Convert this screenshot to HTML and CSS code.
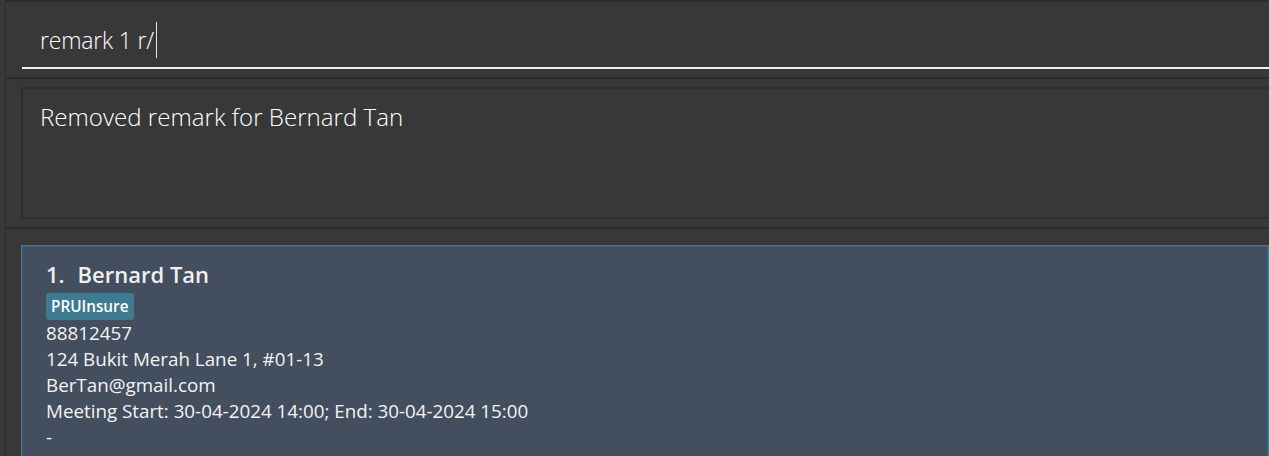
FILE: index.html
```html
<!DOCTYPE html>
<html lang="en">
<head>
<meta charset="utf-8">
<title>Address Book</title>
<link rel="stylesheet" href="styles.css">
</head>
<body>
<div class="app">
  <div class="pane command-pane">
    <div class="command-field"><span class="command-text">remark 1 r/</span><span class="caret"></span></div>
  </div>
  <div class="pane result-pane">
    <div class="result-box">Removed remark for Bernard Tan</div>
  </div>
  <div class="pane list-pane">
    <div class="card">
      <div class="card-title"><span class="card-id">1.</span><span class="card-name">Bernard Tan</span></div>
      <div class="tags"><span class="tag">PRUInsure</span></div>
      <div class="card-field">88812457</div>
      <div class="card-field">124 Bukit Merah Lane 1, #01-13</div>
      <div class="card-field">BerTan@gmail.com</div>
      <div class="card-field">Meeting Start: 30-04-2024 14:00; End: 30-04-2024 15:00</div>
      <div class="card-field">-</div>
    </div>
  </div>
</div>
</body>
</html>
```

FILE: styles.css
```css
html, body {
  margin: 0;
  height: 100%;
}

body {
  background: #383838;
  overflow: hidden;
  font-family: "Open Sans", "Noto Sans", sans-serif;
  color: #ffffff;
}

.app {
  margin-left: 5px;
  border-left: 1px solid #2d2d2d;
  min-height: 100%;
  display: flex;
  flex-direction: column;
}

.pane {
  padding-left: 15px;
}

.command-pane {
  border-top: 2px solid #2b2b2b;
  padding-bottom: 8px;
}

.command-field {
  margin-left: 1px;
  height: 67px;
  box-sizing: border-box;
  padding: 20px 0 0 18px;
  border-bottom: 2px solid #f2f2f2;
  display: flex;
  align-items: flex-start;
  font-size: 23px;
  font-weight: 300;
  line-height: 36px;
  letter-spacing: -0.2px;
}

.caret {
  display: inline-block;
  width: 1px;
  height: 36px;
  margin-left: 2px;
  background: #e8e8e8;
}

.result-pane {
  border-top: 2px solid #2b2b2b;
  padding-top: 8px;
  padding-bottom: 8px;
}

.result-box {
  height: 132px;
  box-sizing: border-box;
  border: 2px solid #2e2e2e;
  border-right: 0;
  padding: 11px 0 0 17px;
  font-size: 24.1px;
  font-weight: 300;
  line-height: 33px;
}

.list-pane {
  flex: 1;
  border-top: 2px solid #2b2b2b;
  padding-top: 16px;
}

.card {
  background: #434e5f;
  border: 1px solid #3e7b91;
  box-shadow: inset 0 0 0 1px rgba(62, 123, 145, 0.45);
  padding: 13px 0 20px 24px;
}

.card-title {
  display: flex;
  height: 30px;
  line-height: 30px;
  font-size: 22px;
  font-weight: 600;
  color: #f0f0f0;
}

.card-id {
  margin-right: 13px;
}

.tags {
  display: flex;
  margin-top: 4px;
  height: 27px;
}

.tag {
  background: #3e7b91;
  border-radius: 3px;
  padding: 1px 5px;
  height: 27px;
  box-sizing: border-box;
  line-height: 25px;
  font-size: 15.3px;
  font-weight: 600;
  color: #ffffff;
}

.card-field {
  font-size: 18.8px;
  line-height: 26px;
  color: #f4f4f4;
}
```
